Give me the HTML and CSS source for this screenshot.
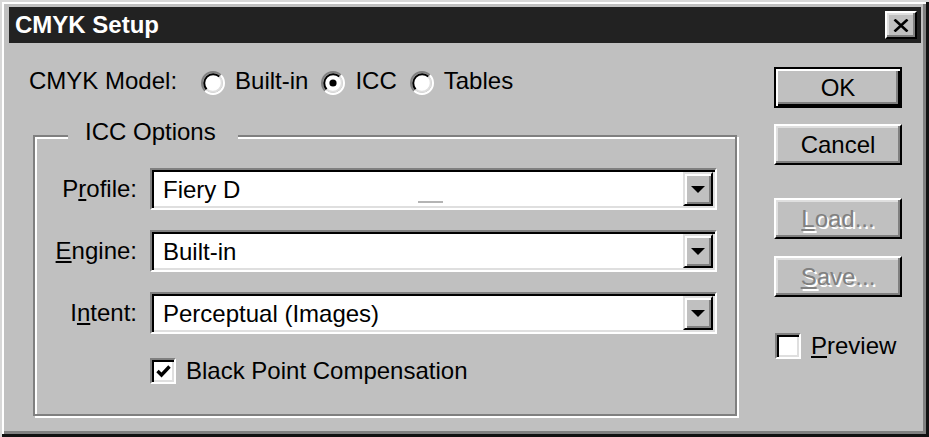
FILE: index.html
```html
<!DOCTYPE html>
<html lang="en">
<head>
<meta charset="utf-8">
<title>CMYK Setup</title>
<link rel="stylesheet" href="styles.css">
</head>
<body>
<div class="window">
  <div class="titlebar">
    <span class="title">CMYK Setup</span>
    <button class="close" aria-label="Close">
      <svg width="16" height="13" viewBox="0 0 16 13"><path d="M1.5 0.5 L14.5 12.5 M14.5 0.5 L1.5 12.5" stroke="#000" stroke-width="2.6" fill="none"/></svg>
    </button>
  </div>
  <div class="content">
    <div class="left">
      <div class="model-row">
        <span class="model-label">CMYK Model:</span>
        <label class="radio">
          <svg class="radio-icon" width="24" height="24" viewBox="0 0 24 24">
            <circle cx="12" cy="12" r="9" fill="#fff"/>
            <path d="M4.22 19.78 A11 11 0 0 1 19.78 4.22" stroke="#808080" stroke-width="2" fill="none"/>
            <path d="M19.78 4.22 A11 11 0 0 1 4.22 19.78" stroke="#fff" stroke-width="2" fill="none"/>
            <path d="M5.64 18.36 A9 9 0 0 1 18.36 5.64" stroke="#000" stroke-width="2" fill="none"/>
            <path d="M18.36 5.64 A9 9 0 0 1 5.64 18.36" stroke="#dfdfdf" stroke-width="2" fill="none"/>
          </svg>
          <span>Built-in</span>
        </label>
        <label class="radio">
          <svg class="radio-icon" width="24" height="24" viewBox="0 0 24 24">
            <circle cx="12" cy="12" r="9" fill="#fff"/>
            <path d="M4.22 19.78 A11 11 0 0 1 19.78 4.22" stroke="#808080" stroke-width="2" fill="none"/>
            <path d="M19.78 4.22 A11 11 0 0 1 4.22 19.78" stroke="#fff" stroke-width="2" fill="none"/>
            <path d="M5.64 18.36 A9 9 0 0 1 18.36 5.64" stroke="#000" stroke-width="2" fill="none"/>
            <path d="M18.36 5.64 A9 9 0 0 1 5.64 18.36" stroke="#dfdfdf" stroke-width="2" fill="none"/>
            <circle cx="12" cy="12" r="3.6" fill="#000"/>
          </svg>
          <span>ICC</span>
        </label>
        <label class="radio">
          <svg class="radio-icon" width="24" height="24" viewBox="0 0 24 24">
            <circle cx="12" cy="12" r="9" fill="#fff"/>
            <path d="M4.22 19.78 A11 11 0 0 1 19.78 4.22" stroke="#808080" stroke-width="2" fill="none"/>
            <path d="M19.78 4.22 A11 11 0 0 1 4.22 19.78" stroke="#fff" stroke-width="2" fill="none"/>
            <path d="M5.64 18.36 A9 9 0 0 1 18.36 5.64" stroke="#000" stroke-width="2" fill="none"/>
            <path d="M18.36 5.64 A9 9 0 0 1 5.64 18.36" stroke="#dfdfdf" stroke-width="2" fill="none"/>
          </svg>
          <span>Tables</span>
        </label>
      </div>

      <fieldset class="group">
        <legend class="group-title">ICC Options</legend>
        <div class="form">
          <span class="lbl">P<u>r</u>ofile:</span>
          <div class="select">
            <span class="select-text">Fiery D</span>
            <span class="artifact"></span>
            <span class="arrow-btn"><span class="tri"></span></span>
          </div>

          <span class="lbl"><u>E</u>ngine:</span>
          <div class="select">
            <span class="select-text">Built-in</span>
            <span class="arrow-btn"><span class="tri"></span></span>
          </div>

          <span class="lbl">I<u>n</u>tent:</span>
          <div class="select">
            <span class="select-text">Perceptual (Images)</span>
            <span class="arrow-btn"><span class="tri"></span></span>
          </div>

          <label class="check bpc">
            <span class="box">
              <svg width="17" height="17" viewBox="0 0 17 17"><path d="M2.5 8 L6.5 12 L14.5 3.5" stroke="#000" stroke-width="3.4" fill="none"/></svg>
            </span>
            <span>Black Point Compensation</span>
          </label>
        </div>
      </fieldset>
    </div>

    <div class="right">
      <button class="btn default">OK</button>
      <button class="btn cancel">Cancel</button>
      <button class="btn disabled load"><u>L</u>oad...</button>
      <button class="btn disabled save"><u>S</u>ave...</button>
      <label class="check preview">
        <span class="box"></span>
        <span><u>P</u>review</span>
      </label>
    </div>
  </div>
</div>
</body>
</html>
```

FILE: styles.css
```css
* { box-sizing: border-box; }

html, body {
  margin: 0;
  padding: 0;
  background: #c0c0c0;
}

body {
  font-family: "Liberation Sans", Arial, sans-serif;
  font-size: 24px;
  line-height: 28px;
  color: #000;
}

.window {
  width: 929px;
  height: 437px;
  background: #c0c0c0;
  padding: 7px 8px 0 9px;
  box-shadow:
    inset 2px 2px 0 #d8d8d8,
    inset -3px -3px 0 #111,
    inset 4px 4px 0 #fff,
    inset -6px -6px 0 #808080;
}

.titlebar {
  height: 36px;
  background: #222;
  display: flex;
  align-items: center;
  justify-content: space-between;
  padding: 0 4px 0 6px;
}

.title {
  color: #fff;
  font-weight: bold;
  font-size: 24px;
  line-height: 28px;
}

.close {
  width: 32px;
  height: 28px;
  padding: 0;
  margin: 0;
  background: #c0c0c0;
  border: 2px solid;
  border-color: #fff #000 #000 #fff;
  box-shadow: inset -2px -2px 0 #808080, inset 2px 2px 0 #dfdfdf;
  display: flex;
  align-items: center;
  justify-content: center;
}

.content {
  display: flex;
  justify-content: space-between;
  padding: 24px 19px 0 20px;
}

.left {
  width: 708px;
  flex: none;
}

.model-row {
  height: 28px;
  display: flex;
  align-items: center;
}

.model-label {
  margin-right: 24px;
}

.radio {
  display: flex;
  align-items: center;
  gap: 10px;
  margin-right: 13px;
}

.radio-icon {
  display: block;
  margin-top: 3px;
}

.group {
  width: 704px;
  min-width: 0;
  margin: 23px 0 0 4px;
  padding: 14px 18px 18px 0;
  border: 2px solid #808080;
  box-shadow: inset 2px 2px 0 #fff, 2px 2px 0 #fff;
}

.group-title {
  margin-left: 33px;
  padding: 0 22px 8px 17px;
  line-height: 28px;
  background: #c0c0c0;
}

.form {
  display: grid;
  grid-template-columns: 102px 1fr;
  grid-auto-rows: 42px;
  column-gap: 13px;
  row-gap: 20px;
}

.lbl {
  text-align: right;
  padding-top: 7px;
  white-space: nowrap;
}

.select {
  position: relative;
  display: flex;
  height: 42px;
  background: #fff;
  border: 2px solid;
  border-color: #808080 #fff #fff #808080;
  box-shadow: inset 2px 2px 0 #000, inset -2px -2px 0 #dfdfdf;
  padding: 2px;
}

.select-text {
  flex: 1;
  padding: 4px 0 0 9px;
  line-height: 28px;
  white-space: nowrap;
}

.artifact {
  position: absolute;
  left: 266px;
  top: 31px;
  width: 25px;
  height: 2px;
  background: #b4b4b4;
}

.arrow-btn {
  flex: none;
  width: 30px;
  height: 34px;
  background: #c0c0c0;
  border: 2px solid;
  border-color: #dfdfdf #000 #000 #dfdfdf;
  box-shadow: inset 2px 2px 0 #fff, inset -2px -2px 0 #808080;
  display: flex;
  align-items: center;
  justify-content: center;
}

.tri {
  width: 0;
  height: 0;
  border-left: 7px solid transparent;
  border-right: 7px solid transparent;
  border-top: 7px solid #000;
}

.check {
  display: flex;
  align-items: center;
  gap: 10px;
  height: 28px;
  white-space: nowrap;
}

.bpc {
  grid-column: 2;
  margin-top: 3px;
}

.box {
  width: 26px;
  height: 26px;
  flex: none;
  background: #fff;
  border: 2px solid;
  border-color: #808080 #fff #fff #808080;
  box-shadow: inset 2px 2px 0 #000, inset -2px -2px 0 #dfdfdf;
  display: flex;
  align-items: center;
  justify-content: center;
}

.right {
  width: 128px;
  flex: none;
  display: flex;
  flex-direction: column;
}

.btn {
  width: 128px;
  height: 41px;
  margin: 0;
  padding: 0;
  font-family: "Liberation Sans", Arial, sans-serif;
  font-size: 24px;
  line-height: 28px;
  color: #000;
  background: #c0c0c0;
  border: 2px solid;
  border-color: #fff #000 #000 #fff;
  box-shadow: inset -2px -2px 0 #808080, inset 2px 2px 0 #dfdfdf;
}

.btn.default {
  border: 2px solid #000;
  box-shadow: inset 2px 2px 0 #fff, inset -2px -2px 0 #000, inset -4px -4px 0 #808080;
}

.cancel { margin-top: 16px; }
.load { margin-top: 33px; }
.save { margin-top: 17px; }

.btn.disabled {
  color: #808080;
  text-shadow: 2px 2px 0 #fff;
}

.preview {
  margin-top: 35px;
  margin-left: 1px;
}
```
